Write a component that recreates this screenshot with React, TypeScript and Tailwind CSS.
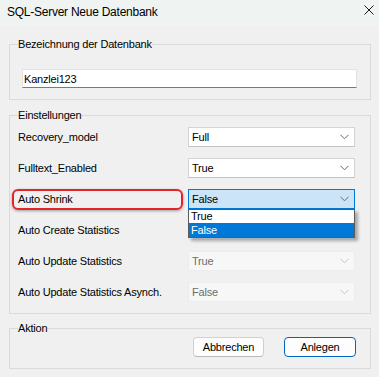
import React from "react";

const font = { fontFamily: '"Liberation Sans", Arial, sans-serif' };

function Chevron({ disabled }: { disabled?: boolean }) {
  return (
    <svg width="9" height="6" viewBox="0 0 9 6" className="shrink-0">
      <path d="M0.5 0.8 L4.5 4.8 L8.5 0.8" fill="none" stroke={disabled ? "#c4c4c4" : "#6a6a6a"} strokeWidth="1" />
    </svg>
  );
}

function Combo({ value, disabled, active, children }: { value: string; disabled?: boolean; active?: boolean; children?: React.ReactNode }) {
  const cls = active
    ? "bg-[#cce4f7] border-[#0078d7] text-black"
    : disabled
    ? "bg-[#f7f7f7] border-[#ececec] text-[#6d6d6d]"
    : "bg-white border-[#d4d4d4] border-b-[#c4c4c4] text-black";
  return (
    <div className="relative w-[167px] h-[20px] shrink-0">
      <div className={`w-full h-full border flex items-center justify-between pl-[3px] pr-[5px] ${cls}`}>
        <span className="leading-[14px]">{value}</span>
        <Chevron disabled={disabled} />
      </div>
      {children}
    </div>
  );
}

function Row({ label, highlight, children }: { label: string; highlight?: boolean; children: React.ReactNode }) {
  return (
    <div className="flex items-center h-[20px]">
      <div
        className={`w-[171px] h-[21px] flex items-center pl-[4px] border-2 rounded-[6px] ${
          highlight ? "border-[#e5242a] shadow-[0_1px_3px_rgba(0,0,0,0.35)]" : "border-transparent"
        }`}
      >
        <span className="leading-[14px] whitespace-nowrap">{label}</span>
      </div>
      <div className="ml-[5px]">{children}</div>
    </div>
  );
}

export default function App() {
  return (
    <div
      className="w-[379px] h-[377px] bg-[#f0f0f0] text-[11px] tracking-[-0.2px] text-black overflow-hidden"
      style={font}
    >
      {/* Title bar */}
      <div className="h-[26px] bg-[#eff3f1] flex items-start justify-between pl-[7px] pr-[5px] pt-[5px]">
        <span className="text-[12px] leading-[14px] tracking-[-0.25px]">SQL-Server Neue Datenbank</span>
        <svg width="10" height="10" viewBox="0 0 10 10">
          <path d="M0.5 0.5 L9.5 9.5 M9.5 0.5 L0.5 9.5" stroke="#1a1a1a" strokeWidth="1" />
        </svg>
      </div>

      <div className="pl-[9px] pr-[8px]">
        {/* Group 1 */}
        <fieldset className="mt-[11px] border border-[#dadada] pl-[12px] pr-[13px] pb-[11px]">
          <legend className="-ml-[4px] leading-[14px]">Bezeichnung der Datenbank</legend>
          <div className="mt-[18px] h-[19px] bg-white border border-[#e2e2e2] border-b-[#7a7a7a] flex items-center pl-[1px]">
            <span className="leading-[14px]">Kanzlei123</span>
          </div>
        </fieldset>

        {/* Group 2 */}
        <fieldset className="mt-[8px] border border-[#dadada] pl-[2px] pr-[15px] pb-[11px]">
          <legend className="ml-[6px] leading-[14px]">Einstellungen</legend>
          <div className="flex flex-col gap-[11px] pt-[5px]">
            <Row label="Recovery_model">
              <Combo value="Full" />
            </Row>
            <Row label="Fulltext_Enabled">
              <Combo value="True" />
            </Row>
            <Row label="Auto Shrink" highlight>
              <Combo value="False" active>
                <div className="absolute left-0 top-[20px] z-10 w-[167px] border border-[#5a5a5a] bg-white shadow-[3px_3px_3px_rgba(0,0,0,0.3)]">
                  <div className="h-[13px] pl-[2px] leading-[13px] text-black">True</div>
                  <div className="h-[14px] pl-[2px] leading-[14px] bg-[#0078d7] text-white">False</div>
                </div>
              </Combo>
            </Row>
            <Row label="Auto Create Statistics">
              <Combo value="" disabled />
            </Row>
            <Row label="Auto Update Statistics">
              <Combo value="True" disabled />
            </Row>
            <Row label="Auto Update Statistics Asynch.">
              <Combo value="False" disabled />
            </Row>
          </div>
        </fieldset>

        {/* Group 3 */}
        <fieldset className="mt-[7px] border border-[#dadada] pr-[14px] pb-[11px]">
          <legend className="ml-[8px] leading-[14px]">Aktion</legend>
          <div className="flex justify-end gap-[20px] mt-[2px]">
            <button className="w-[71px] h-[20px] bg-[#fdfdfd] border border-[#d0d0d0] border-b-[#b8b8b8] rounded-[4px] leading-[14px] text-black">
              Abbrechen
            </button>
            <button className="w-[72px] h-[20px] bg-[#fdfdfd] border border-[#0067c0] rounded-[4px] leading-[14px] text-black">
              Anlegen
            </button>
          </div>
        </fieldset>
      </div>
    </div>
  );
}
